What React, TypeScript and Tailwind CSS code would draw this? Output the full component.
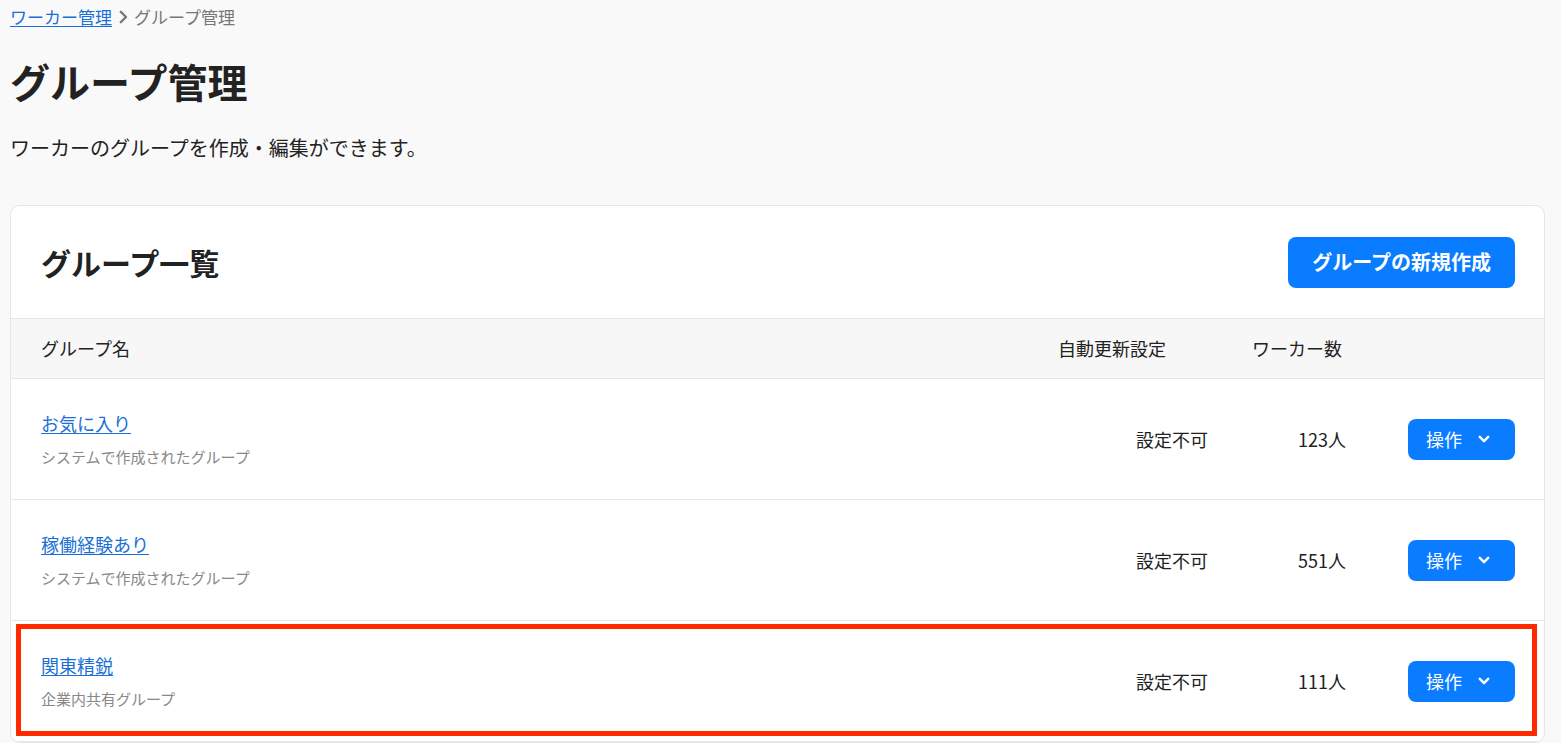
import React from 'react';

const groups = [
  { name: 'お気に入り', note: 'システムで作成されたグループ', auto: '設定不可', count: '123人' },
  { name: '稼働経験あり', note: 'システムで作成されたグループ', auto: '設定不可', count: '551人' },
  { name: '関東精鋭', note: '企業内共有グループ', auto: '設定不可', count: '111人', marked: true },
];

const font = { fontFamily: '"Noto Sans CJK JP", "Noto Sans", sans-serif' };

const Chevron = ({ className }: { className?: string }) => (
  <svg viewBox="0 0 24 24" className={className} fill="none" stroke="currentColor" strokeWidth={3} strokeLinecap="round" strokeLinejoin="round">
    <path d="M7 9.5l5 5 5-5" />
  </svg>
);

const App: React.FC = () => {
  return (
    <div className="min-h-[743px] bg-[#f9f9f9] text-[#222] pl-[10px] pr-[16px]" style={font}>
      {/* Breadcrumb */}
      <nav className="flex items-center h-[34px] text-[17px]">
        <a href="#" className="text-[#1a6fd6] underline underline-offset-2">ワーカー管理</a>
        <svg viewBox="0 0 24 24" className="w-[18px] h-[18px] mx-[2px] text-[#777]" fill="none" stroke="currentColor" strokeWidth={3.2} strokeLinecap="round" strokeLinejoin="round">
          <path d="M9 5l7 7-7 7" />
        </svg>
        <span className="text-[#777]">グループ管理</span>
      </nav>

      {/* Title */}
      <h1 className="mt-[21px] text-[40px] leading-[52px] font-bold">グループ管理</h1>
      <p className="mt-[26px] text-[20px] leading-[30px]">ワーカーのグループを作成・編集ができます。</p>

      {/* Card */}
      <div className="mt-[42px] bg-white border border-[#e6e6e6] rounded-[10px] overflow-hidden">
        <div className="flex items-center justify-between pl-[30px] pr-[29px] h-[112px]">
          <h2 className="text-[30px] font-bold">グループ一覧</h2>
          <button className="h-[51px] px-[24px] rounded-[8px] bg-[#0a7cff] text-white text-[20px] font-bold">
            グループの新規作成
          </button>
        </div>

        <div className="flex items-center h-[61px] pl-[30px] pr-[29px] bg-[#f7f7f7] border-y border-[#e6e6e6] text-[18px]">
          <div className="flex-1">グループ名</div>
          <div className="w-[194px]">自動更新設定</div>
          <div className="w-[263px]">ワーカー数</div>
        </div>

        {groups.map((g) => (
          <div key={g.name} className="relative flex items-center h-[121px] pl-[30px] pr-[29px] border-b border-[#e6e6e6]">
            <div className="flex-1 flex flex-col">
              <a href="#" className="text-[#1a6fd6] text-[18px] leading-[26px] underline underline-offset-2 self-start">{g.name}</a>
              <span className="mt-[10px] text-[15px] leading-[22px] text-[#888]">{g.note}</span>
            </div>
            <div className="w-[150px] text-right text-[18px]">{g.auto}</div>
            <div className="w-[138px] text-right text-[18px]">{g.count}</div>
            <div className="w-[169px] flex justify-end">
              <button className="flex items-center h-[41px] w-[107px] pl-[18px] rounded-[8px] bg-[#0a7cff] text-white text-[18px]">
                操作
                <Chevron className="w-[20px] h-[20px] ml-[12px]" />
              </button>
            </div>
            {g.marked && (
              <div className="absolute left-[5px] right-[7px] top-[3px] bottom-[5px] border-[5px] border-[#ff2a00] pointer-events-none" />
            )}
          </div>
        ))}
      </div>
    </div>
  );
};

export default App;
